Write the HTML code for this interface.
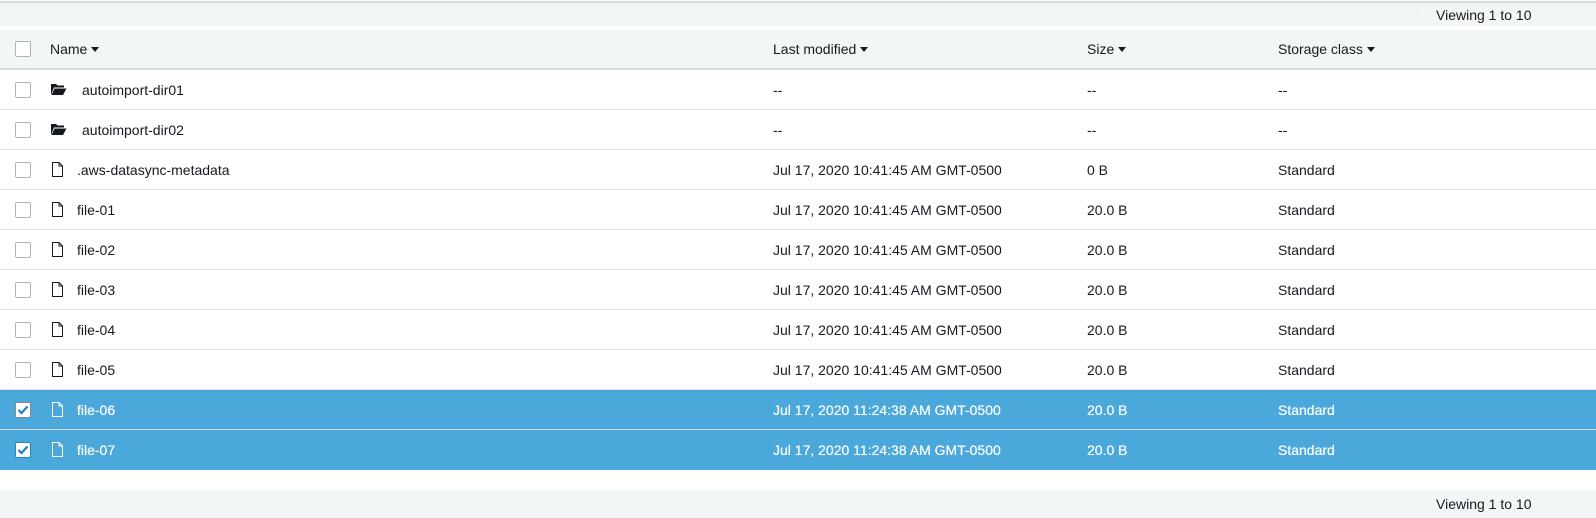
<!DOCTYPE html>
<html><head><style>
body{margin:0;width:1596px;height:518px;background:#fff;font-family:"Liberation Sans",Arial,sans-serif;font-size:14px;color:#16191f;position:relative;overflow:hidden}
.topline{position:absolute;left:0;top:1px;width:1596px;height:2px;background:#d5dbdb}
.bar{position:absolute;left:0;width:1596px;background:#f3f6f7}
.view{position:absolute;left:1436px;color:#16191f}
.view:before{content:"‹";position:absolute;left:-22px;color:#eaeded;font-size:16px;top:-2px}
.view:after{content:"›";position:absolute;right:-20px;color:#eaeded;font-size:16px;top:-2px}
.row{position:absolute;left:0;width:1596px;height:39px;border-bottom:1px solid #e1e4e4}
.row span{position:absolute;top:12px;white-space:nowrap}
.hdr{top:30px;height:38px;background:#f3f6f7;border-bottom:2px solid #d5dbdb}
.hdr span{top:11px}
.cb{position:absolute;left:15px;top:12px;width:14px;height:14px;border:1px solid #aab7b8;border-radius:2px;background:#fff}
.sel{background:#4aa8db;color:#fff;border-bottom:1px solid #d5dbdb}
.sel span{text-shadow:0 0 0.5px #fff}
.sel .cb{border-color:#888}
.caret{display:inline-block;width:0;height:0;border-left:4px solid transparent;border-right:4px solid transparent;border-top:5px solid #16191f;margin-left:4px;vertical-align:2px}
svg{position:absolute}
</style></head><body>
<div class="topline"></div>
<div class="bar" style="top:3px;height:23px"><div class="view" style="top:4px">Viewing 1 to 10</div></div>

<div class="row hdr"><div class="cb" style="top:11px"></div>
<span style="left:50px">Name<i class="caret"></i></span>
<span style="left:773px">Last modified<i class="caret"></i></span>
<span style="left:1087px">Size<i class="caret"></i></span>
<span style="left:1278px">Storage class<i class="caret"></i></span></div>

<div class="row" style="top:70px"><div class="cb"></div>
<svg style="left:50px;top:13px" width="17" height="13" viewBox="0 0 17 13"><path d="M1 1h5l1.5 1.5H14v2H4L1 12z" fill="#16191f"/><path d="M4.5 5.5H16.5L13 12H1.5z" fill="#16191f"/></svg>
<span style="left:82px">autoimport-dir01</span><span style="left:773px">--</span><span style="left:1087px">--</span><span style="left:1278px">--</span></div>
<div class="row" style="top:110px"><div class="cb"></div>
<svg style="left:50px;top:13px" width="17" height="13" viewBox="0 0 17 13"><path d="M1 1h5l1.5 1.5H14v2H4L1 12z" fill="#16191f"/><path d="M4.5 5.5H16.5L13 12H1.5z" fill="#16191f"/></svg>
<span style="left:82px">autoimport-dir02</span><span style="left:773px">--</span><span style="left:1087px">--</span><span style="left:1278px">--</span></div>

<div class="row" style="top:150px"><div class="cb"></div><svg style="left:51px;top:11px" width="13" height="17" viewBox="0 0 13 17"><path d="M1.5 1.5h6.5l3.5 3.5v10.5h-10z M8 1.5v3.5h3.5" fill="none" stroke="#16191f" stroke-width="1"/></svg><span style="left:77px">.aws-datasync-metadata</span><span style="left:773px">Jul 17, 2020 10:41:45 AM GMT-0500</span><span style="left:1087px">0 B</span><span style="left:1278px">Standard</span></div>
<div class="row" style="top:190px"><div class="cb"></div><svg style="left:51px;top:11px" width="13" height="17" viewBox="0 0 13 17"><path d="M1.5 1.5h6.5l3.5 3.5v10.5h-10z M8 1.5v3.5h3.5" fill="none" stroke="#16191f" stroke-width="1"/></svg><span style="left:77px">file-01</span><span style="left:773px">Jul 17, 2020 10:41:45 AM GMT-0500</span><span style="left:1087px">20.0 B</span><span style="left:1278px">Standard</span></div>
<div class="row" style="top:230px"><div class="cb"></div><svg style="left:51px;top:11px" width="13" height="17" viewBox="0 0 13 17"><path d="M1.5 1.5h6.5l3.5 3.5v10.5h-10z M8 1.5v3.5h3.5" fill="none" stroke="#16191f" stroke-width="1"/></svg><span style="left:77px">file-02</span><span style="left:773px">Jul 17, 2020 10:41:45 AM GMT-0500</span><span style="left:1087px">20.0 B</span><span style="left:1278px">Standard</span></div>
<div class="row" style="top:270px"><div class="cb"></div><svg style="left:51px;top:11px" width="13" height="17" viewBox="0 0 13 17"><path d="M1.5 1.5h6.5l3.5 3.5v10.5h-10z M8 1.5v3.5h3.5" fill="none" stroke="#16191f" stroke-width="1"/></svg><span style="left:77px">file-03</span><span style="left:773px">Jul 17, 2020 10:41:45 AM GMT-0500</span><span style="left:1087px">20.0 B</span><span style="left:1278px">Standard</span></div>
<div class="row" style="top:310px"><div class="cb"></div><svg style="left:51px;top:11px" width="13" height="17" viewBox="0 0 13 17"><path d="M1.5 1.5h6.5l3.5 3.5v10.5h-10z M8 1.5v3.5h3.5" fill="none" stroke="#16191f" stroke-width="1"/></svg><span style="left:77px">file-04</span><span style="left:773px">Jul 17, 2020 10:41:45 AM GMT-0500</span><span style="left:1087px">20.0 B</span><span style="left:1278px">Standard</span></div>
<div class="row" style="top:350px"><div class="cb"></div><svg style="left:51px;top:11px" width="13" height="17" viewBox="0 0 13 17"><path d="M1.5 1.5h6.5l3.5 3.5v10.5h-10z M8 1.5v3.5h3.5" fill="none" stroke="#16191f" stroke-width="1"/></svg><span style="left:77px">file-05</span><span style="left:773px">Jul 17, 2020 10:41:45 AM GMT-0500</span><span style="left:1087px">20.0 B</span><span style="left:1278px">Standard</span></div>

<div class="row sel" style="top:390px"><div class="cb"><svg style="left:1px;top:2px" width="12" height="10" viewBox="0 0 12 10"><path d="M1.5 5l3 3L10.5 1.5" fill="none" stroke="#1f7fc4" stroke-width="2.2"/></svg></div><svg style="left:51px;top:11px" width="13" height="17" viewBox="0 0 13 17"><path d="M1.5 1.5h6.5l3.5 3.5v10.5h-10z M8 1.5v3.5h3.5" fill="none" stroke="#fff" stroke-width="1"/></svg><span style="left:77px">file-06</span><span style="left:773px">Jul 17, 2020 11:24:38 AM GMT-0500</span><span style="left:1087px">20.0 B</span><span style="left:1278px">Standard</span></div>
<div class="row sel" style="top:430px;border-bottom:none;height:40px"><div class="cb" style="border-color:#2a7fd0"><svg style="left:1px;top:2px" width="12" height="10" viewBox="0 0 12 10"><path d="M1.5 5l3 3L10.5 1.5" fill="none" stroke="#1f7fc4" stroke-width="2.2"/></svg></div><svg style="left:51px;top:11px" width="13" height="17" viewBox="0 0 13 17"><path d="M1.5 1.5h6.5l3.5 3.5v10.5h-10z M8 1.5v3.5h3.5" fill="none" stroke="#fff" stroke-width="1"/></svg><span style="left:77px">file-07</span><span style="left:773px">Jul 17, 2020 11:24:38 AM GMT-0500</span><span style="left:1087px">20.0 B</span><span style="left:1278px">Standard</span></div>

<div class="bar" style="top:490px;height:28px"><div class="view" style="top:6px">Viewing 1 to 10</div></div>
</body></html>
